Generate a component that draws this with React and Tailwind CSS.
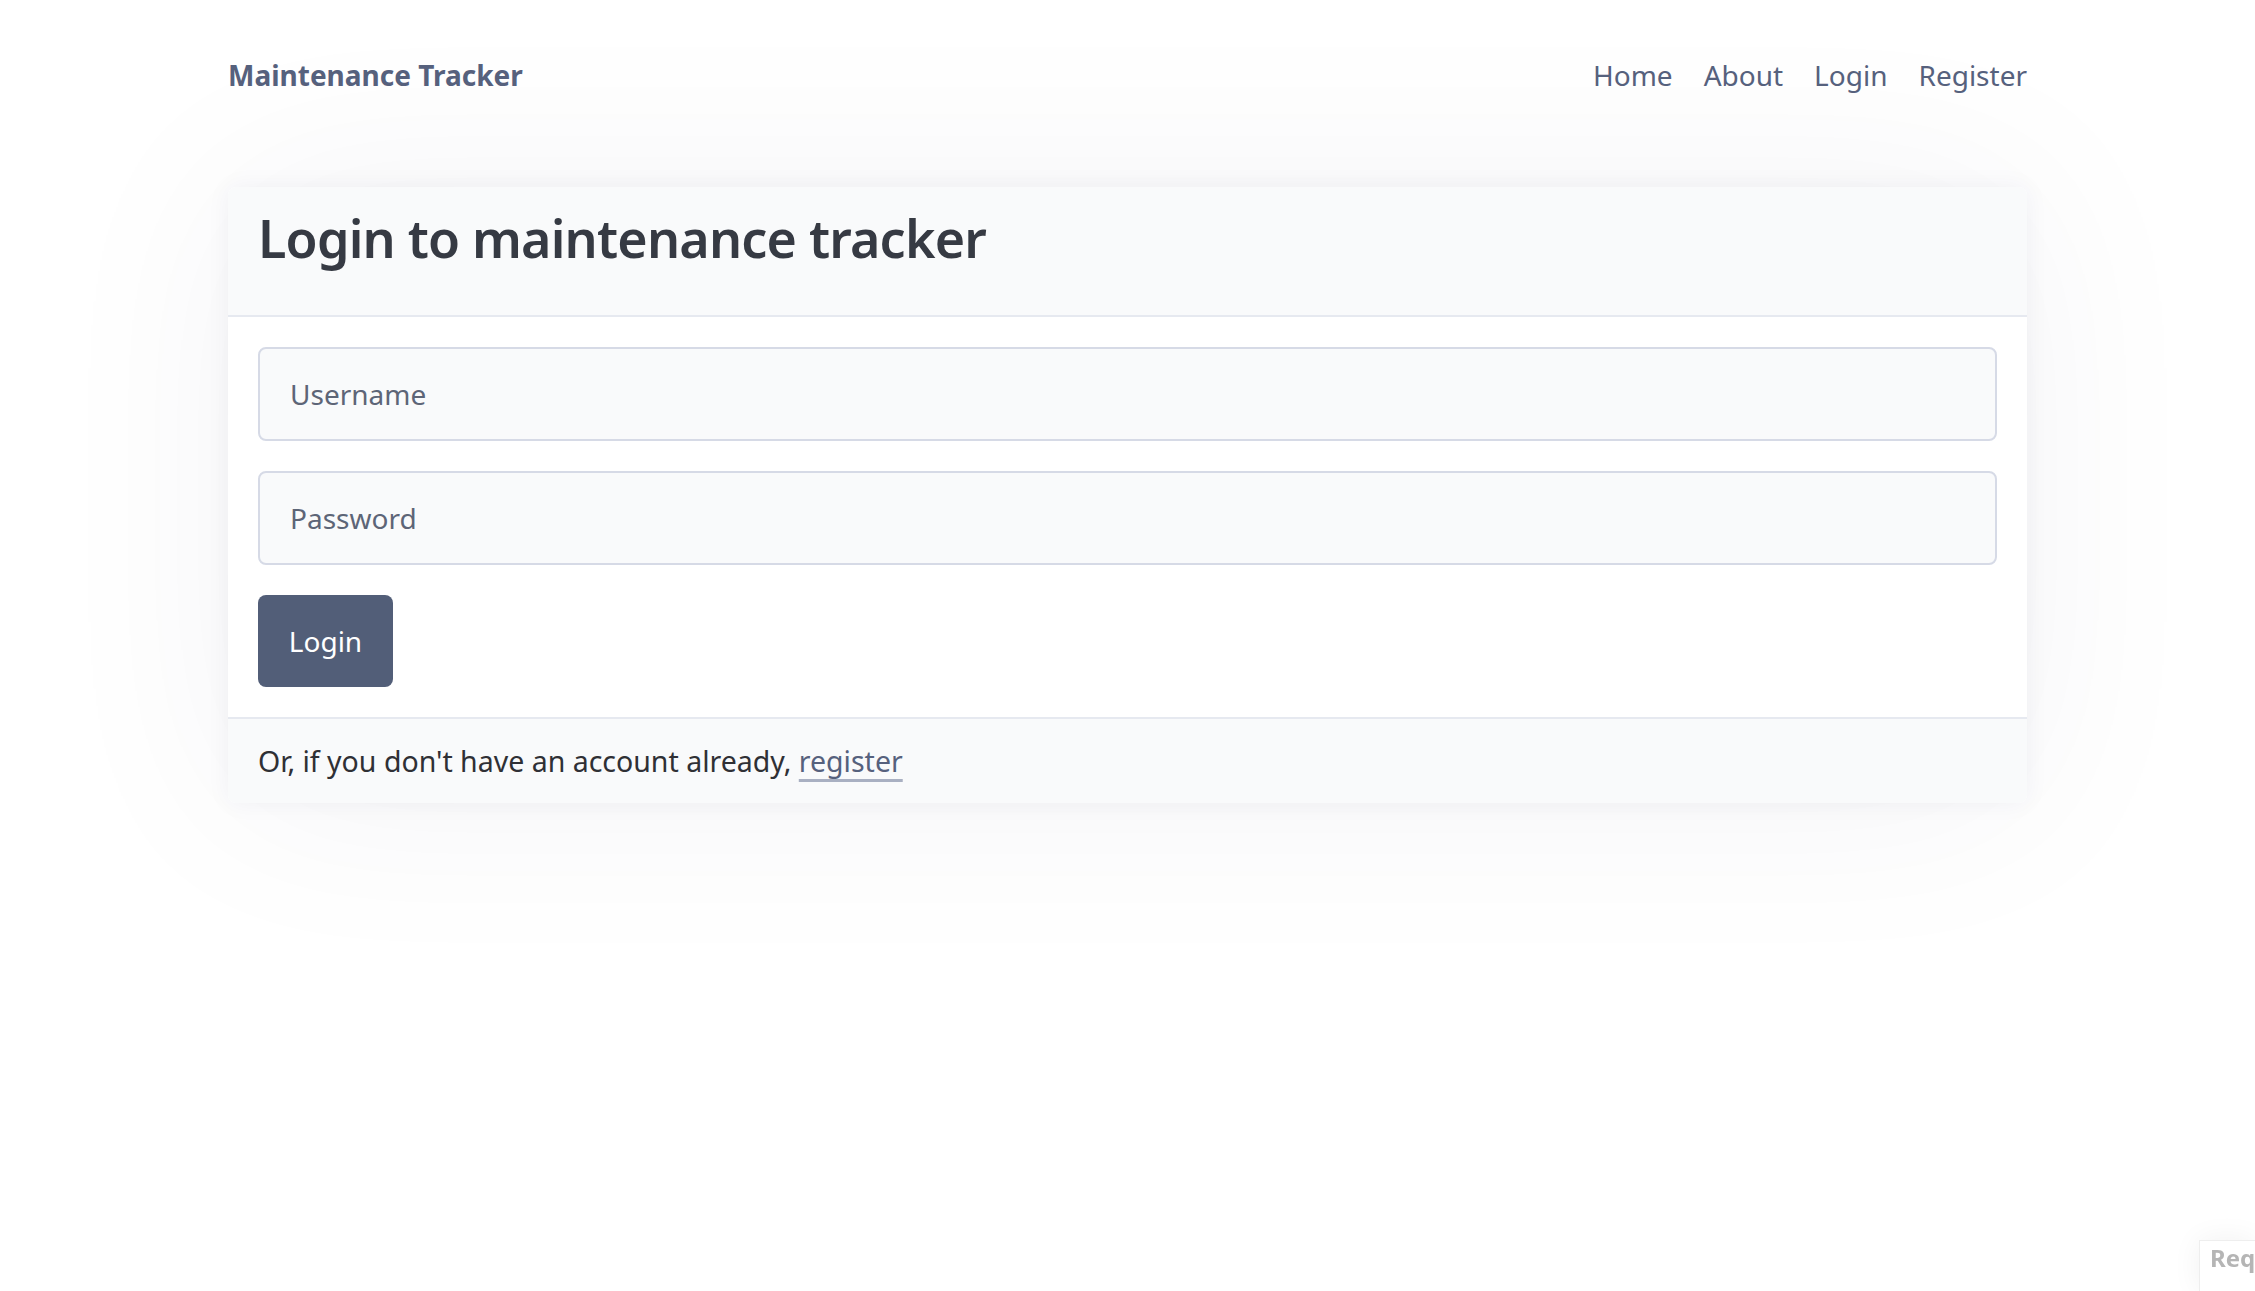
import React from "react";

const font = { fontFamily: '"Noto Sans", "Open Sans", Arial, sans-serif' };

export default function App() {
  return (
    <div className="min-h-[1291px] bg-white text-[#2f3035]" style={font}>
      <div className="mx-auto w-[1799px]">
        {/* Navbar */}
        <nav className="flex h-[150px] items-center justify-between">
          <a href="#" className="text-[28px] font-bold text-[#56617d]">
            Maintenance Tracker
          </a>
          <ul className="flex items-center gap-[31px] text-[28px] text-[#56617d]">
            <li><a href="#">Home</a></li>
            <li><a href="#">About</a></li>
            <li><a href="#">Login</a></li>
            <li><a href="#">Register</a></li>
          </ul>
        </nav>

        {/* Login card */}
        <div className="mt-[37px] overflow-hidden rounded-[8px] bg-white shadow-[0_0_24px_rgba(30,40,80,0.05),0_0_200px_rgba(30,40,80,0.05)]">
          <div className="h-[130px] border-b-2 border-[#e6e9f0] bg-[#f9fafb] px-[30px] pt-[25px]">
            <h2 className="text-[52px] font-semibold leading-none tracking-[-0.8px] text-[#363a43]">
              Login to maintenance tracker
            </h2>
          </div>

          <form className="flex flex-col gap-[30px] p-[30px]">
            <input
              type="text"
              placeholder="Username"
              className="h-[94px] w-full rounded-[8px] border-2 border-[#d6dae6] bg-[#f9fafb] px-[30px] text-[28px] text-[#2f3035] outline-none placeholder:text-[#5d6577]"
            />
            <input
              type="password"
              placeholder="Password"
              className="h-[94px] w-full rounded-[8px] border-2 border-[#d6dae6] bg-[#f9fafb] px-[30px] text-[28px] text-[#2f3035] outline-none placeholder:text-[#5d6577]"
            />
            <div>
              <button
                type="button"
                className="h-[92px] w-[135px] rounded-[8px] bg-[#525e78] text-[28px] text-white"
              >
                Login
              </button>
            </div>
          </form>

          <div className="flex h-[86px] items-center border-t-2 border-[#e6e9f0] bg-[#f9fafb] px-[30px] text-[28.5px]">
            <p>
              Or, if you don't have an account already,{" "}
              <a href="#" className="text-[#56617d] underline decoration-[#a9b0c2] decoration-[3px] underline-offset-[7px]">
                register
              </a>
            </p>
          </div>
        </div>
      </div>

      {/* debug toolbar peeking from the corner */}
      <div className="fixed bottom-0 right-0 h-[51px] w-[56px] overflow-hidden border-l border-t border-[#eeeeee] bg-white pl-[10px] pt-[5px] shadow-[0_0_30px_rgba(0,0,0,0.06)]">
        <span className="text-[24px] font-bold leading-none text-[#b5b5b5]">Req</span>
      </div>
    </div>
  );
}
